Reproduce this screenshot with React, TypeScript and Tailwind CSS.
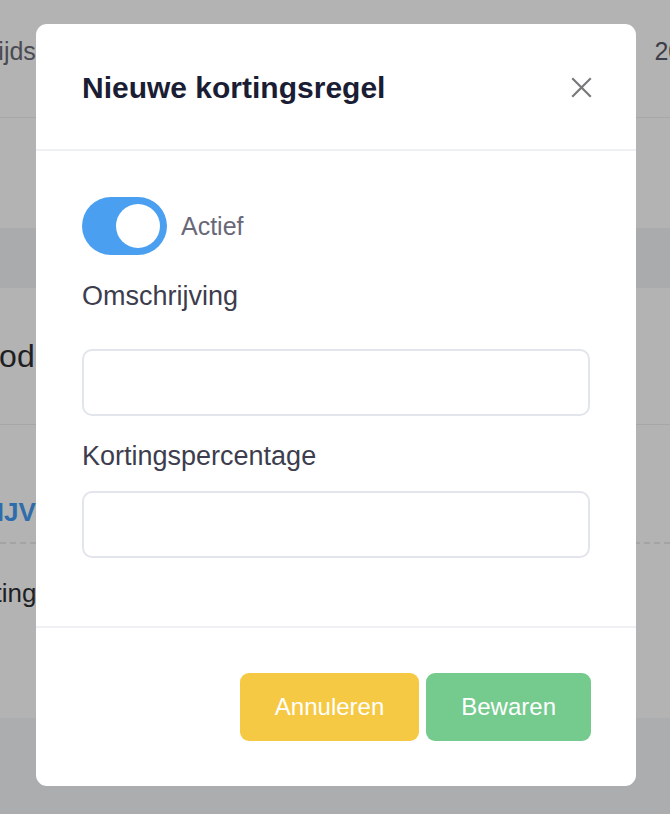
const font = { fontFamily: '"Liberation Sans", Arial, sans-serif' }

function Backdrop() {
  return (
    <div className="flex h-[814px] flex-col bg-[#b3b3b3] text-[#3a3a44]" style={font}>
      <div className="flex h-[118px] shrink-0 items-start justify-between border-b border-[#a7a7a8] pt-[33px]">
        <span className="-ml-[16px] text-[25px] text-[#4a4a52]">Tijdstip</span>
        <span className="-mr-[40px] text-[25px] text-[#3e3e4a]">2021</span>
      </div>
      <div className="h-[110px] shrink-0" />
      <div className="h-[60px] shrink-0 bg-[#aaabac]" />
      <div className="flex h-[137px] shrink-0 items-center border-b border-[#a7a7a8]">
        <span className="-ml-[24px] text-[32px] text-[#1f1f24]">Cod</span>
      </div>
      <div className="h-[293px] shrink-0 pt-[68px]">
        <div className="-ml-[22px] text-[26px] font-bold text-[#2e6dab]">NIJVI</div>
        <div className="mt-[10px] border-t-2 border-dashed border-[#a4a4a6]" />
        <div className="mt-[30px] -ml-[46px] text-[26px] text-[#1f1f24]">Korting</div>
      </div>
      <div className="flex-1 bg-[#acadaf]" />
    </div>
  )
}

function Toggle() {
  return (
    <div className="flex h-[58px] w-[85px] items-center justify-end rounded-full bg-[#4a9ff0] pr-[7px]">
      <div className="size-[44px] rounded-full bg-white" />
    </div>
  )
}

function CloseIcon() {
  return (
    <svg width="21" height="21" viewBox="0 0 21 21" fill="none" stroke="#79797b" strokeWidth="2.2" strokeLinecap="square">
      <path d="M2 2 L19 19 M19 2 L2 19" />
    </svg>
  )
}

export default function App() {
  return (
    <div className="relative h-[814px] overflow-hidden" style={font}>
      <Backdrop />
      <div className="absolute left-[36px] top-[24px] flex h-[762px] w-[600px] flex-col rounded-[11px] bg-white">
        <div className="flex h-[127px] items-center justify-between border-b-2 border-[#eff0f4] pl-[46px] pr-[44px] pt-[2px]">
          <h2 className="text-[30px] font-bold text-[#1a1d33]">Nieuwe kortingsregel</h2>
          <CloseIcon />
        </div>
        <div className="flex-1 px-[46px] pt-[46px]">
          <div className="flex items-center gap-[14px]">
            <Toggle />
            <span className="mt-[2px] text-[25px] text-[#686878]">Actief</span>
          </div>
          <label className="mt-[23px] block text-[27px] leading-[36px] text-[#3d3d4e]">Omschrijving</label>
          <input className="mt-[35px] block h-[67px] w-full rounded-[10px] border-2 border-[#e3e5ec] px-4 text-[24px] outline-none" />
          <label className="mt-[22px] block text-[27px] leading-[36px] text-[#3d3d4e]">Kortingspercentage</label>
          <input className="mt-[17px] block h-[67px] w-full rounded-[10px] border-2 border-[#e3e5ec] px-4 text-[24px] outline-none" />
        </div>
        <div className="flex h-[160px] items-start justify-end gap-[7px] border-t-2 border-[#eff0f4] pr-[45px] pt-[45px]">
          <button className="h-[68px] rounded-[9px] bg-[#f6c945] px-[35px] text-[24px] text-white">Annuleren</button>
          <button className="h-[68px] rounded-[9px] bg-[#75ca8e] px-[35px] text-[24px] text-white">Bewaren</button>
        </div>
      </div>
    </div>
  )
}
